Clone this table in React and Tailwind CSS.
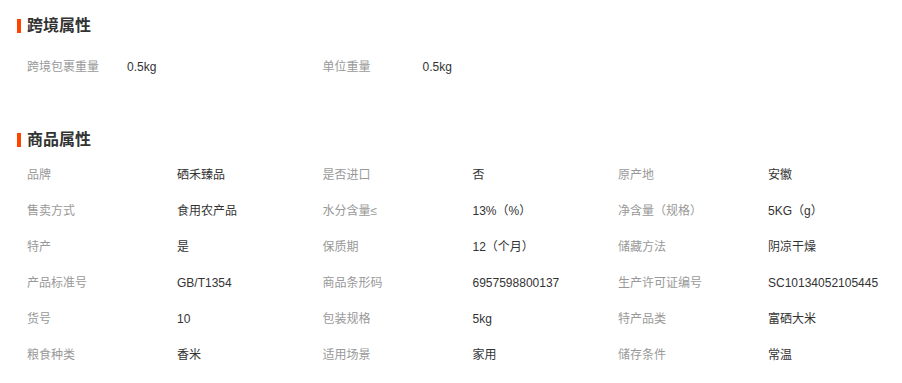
const crossBorder = [
  { label: '跨境包裹重量', value: '0.5kg' },
  { label: '单位重量', value: '0.5kg' },
];

const attrs = [
  ['品牌', '硒禾臻品'],
  ['是否进口', '否'],
  ['原产地', '安徽'],
  ['售卖方式', '食用农产品'],
  ['水分含量≤', '13%（%）'],
  ['净含量（规格）', '5KG（g）'],
  ['特产', '是'],
  ['保质期', '12（个月）'],
  ['储藏方法', '阴凉干燥'],
  ['产品标准号', 'GB/T1354'],
  ['商品条形码', '6957598800137'],
  ['生产许可证编号', 'SC10134052105445'],
  ['货号', '10'],
  ['包装规格', '5kg'],
  ['特产品类', '富硒大米'],
  ['粮食种类', '香米'],
  ['适用场景', '家用'],
  ['储存条件', '常温'],
];

function Heading({ children }) {
  return (
    <div className="flex items-center h-7">
      <span className="w-1 h-[14px] bg-[#ff4400]" />
      <span className="ml-[6px] text-base font-bold text-[#333]">{children}</span>
    </div>
  );
}

export default function App() {
  return (
    <div
      className="w-[902px] h-[383px] bg-white pl-[17px] pt-[12px] overflow-hidden"
      style={{ fontFamily: '"Liberation Sans", "Noto Sans CJK SC", sans-serif' }}
    >
      <Heading>跨境属性</Heading>
      <div className="mt-[9px] pl-[10px] grid grid-cols-[295.5px_295.5px_1fr] text-xs">
        {crossBorder.map((item) => (
          <div key={item.label} className="flex items-center h-9">
            <span className="w-[100px] text-[#999]">{item.label}</span>
            <span className="text-[#333]">{item.value}</span>
          </div>
        ))}
      </div>

      <div className="mt-[41px]">
        <Heading>商品属性</Heading>
      </div>
      <div className="mt-[3px] pl-[10px] grid grid-cols-[295.5px_295.5px_1fr] text-xs">
        {attrs.map(([label, value]) => (
          <div key={label} className="flex items-center h-9">
            <span className="w-[150px] shrink-0 text-[#999]">{label}</span>
            <span className="text-[#333] whitespace-nowrap">{value}</span>
          </div>
        ))}
      </div>
    </div>
  );
}
